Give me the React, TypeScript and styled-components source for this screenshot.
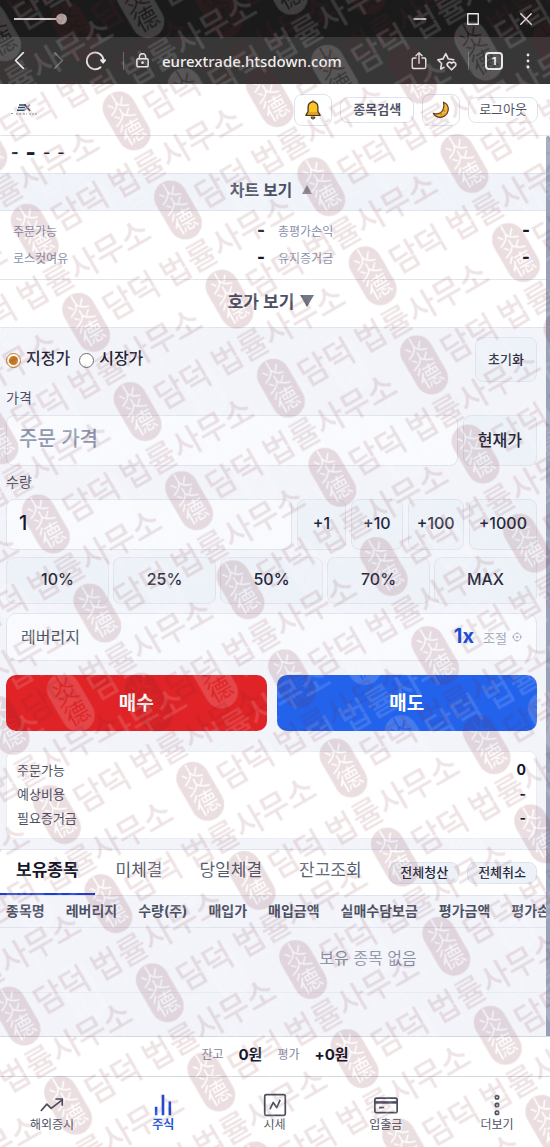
import React, { useState } from "react";
import styled, { createGlobalStyle } from "styled-components";

const GlobalStyle = createGlobalStyle`
  *, *::before, *::after { box-sizing: border-box; }
  body {
    margin: 0;
    background: #ffffff;
    color: #1c2033;
    font-family: "Inter", "Noto Sans CJK KR", sans-serif;
    font-size: 16px;
  }
  button, input { font-family: inherit; margin: 0; }
  button { cursor: pointer; }
`;

const line = "#dfe3ee";

const Page = styled.div`
  position: relative;
  display: flex;
  flex-direction: column;
  min-height: 100vh;
  overflow: hidden;
`;

/* Browser window */

const TitleBar = styled.div`
  display: flex;
  align-items: center;
  justify-content: space-between;
  height: 37px;
  padding: 0 17px 0 14px;
  background: #1a1a1a;
`;

const WindowButtons = styled.div`
  display: flex;
  gap: 39px;
`;

const IconButton = styled.button`
  display: flex;
  align-items: center;
  justify-content: center;
  padding: 0;
  border: 0;
  background: none;
  color: #e8e6e6;
  &:disabled { color: #777373; }
`;

const AddressBar = styled.div`
  display: flex;
  align-items: center;
  height: 47px;
  padding: 0 20px 0 12px;
  background: #373737;
  color: #e8e6e6;
`;

const History = styled.div`
  display: flex;
  align-items: center;
  gap: 20px;
`;

const Divider = styled.span<{ $before: number; $after: number }>`
  width: 1px;
  height: 18px;
  margin: 0 ${(p) => p.$after}px 0 ${(p) => p.$before}px;
  background: #6a6868;
`;

const Url = styled.span`
  flex: 1;
  margin-left: 12px;
  font-family: "Noto Sans", sans-serif;
  font-size: 15px;
  font-weight: 500;
  color: #f2f0f0;
`;

const BrowserTools = styled.div`
  display: flex;
  align-items: center;
`;

const ToolPair = styled.div`
  display: flex;
  gap: 9px;
`;

const TabCount = styled.button`
  width: 18px;
  height: 18px;
  margin-right: 23px;
  padding: 0;
  border: 2px solid #e8e6e6;
  border-radius: 4px;
  background: none;
  color: #f2f0f0;
  font-size: 11px;
  font-weight: 700;
  line-height: 14px;
`;

/* Site header */

const Header = styled.header`
  display: flex;
  align-items: center;
  justify-content: space-between;
  height: 52px;
  padding: 0 12px 0 11px;
  border-bottom: 1px solid ${line};
  background: #ffffff;
`;

const HeaderActions = styled.div`
  display: flex;
  align-items: center;
  gap: 8px;
`;

const SquareButton = styled.button`
  display: flex;
  align-items: center;
  justify-content: center;
  width: 38px;
  height: 32px;
  padding: 0;
  border: 1px solid #dde2f0;
  border-radius: 8px;
  background: #ffffff;
`;

const HeaderButton = styled.button<{ $bold?: boolean }>`
  height: 26px;
  padding: 0 ${(p) => (p.$bold ? 12 : 10)}px 2px;
  border: 1px solid #dde2f0;
  border-radius: 8px;
  background: #ffffff;
  color: #4a5064;
  font-size: 13px;
  font-weight: ${(p) => (p.$bold ? 700 : 400)};
  line-height: 20px;
`;

/* Scrolling body */

const Body = styled.div`
  display: flex;
  flex: 1;
`;

const Main = styled.main`
  flex: 1;
  min-width: 0;
  background: #f2f4fa;
`;

const ScrollTrack = styled.div`
  display: flex;
  width: 4px;
  background: #ffffff;
`;

const ScrollThumb = styled.div`
  flex: 1;
  border-radius: 4px 4px 0 0;
  background: #98a0b5;
`;

const Ticker = styled.div`
  display: flex;
  align-items: center;
  gap: 7px;
  height: 37px;
  padding: 0 11px 6px;
  background: #ffffff;
`;

const Quote = styled.span<{ $size: number; $bold?: boolean }>`
  font-size: ${(p) => p.$size}px;
  font-weight: ${(p) => (p.$bold ? 800 : 500)};
  line-height: 24px;
`;

const Toggle = styled.button<{ $tinted?: boolean }>`
  display: flex;
  align-items: center;
  justify-content: center;
  gap: ${(p) => (p.$tinted ? "10px" : "6px")};
  width: 100%;
  height: ${(p) => (p.$tinted ? "38px" : "49px")};
  padding: 0 4px 6px 0;
  border: 0;
  border-top: 1px solid ${line};
  border-bottom: 1px solid ${line};
  background: ${(p) => (p.$tinted ? "#f0f3f9" : "#ffffff")};
  color: #4a5064;
  font-size: ${(p) => (p.$tinted ? "16px" : "17px")};
  font-weight: 700;
`;

const AccountGrid = styled.dl`
  display: grid;
  grid-template-columns: 1fr 1fr;
  column-gap: 13px;
  margin: 0;
  padding: 6px 16px 8px 13px;
  background: #ffffff;
`;

const Pair = styled.div`
  display: flex;
  align-items: center;
  justify-content: space-between;
  height: 27px;
  padding-bottom: 1px;
`;

const PairLabel = styled.dt`
  color: #8a90aa;
  font-size: 12px;
`;

const PairValue = styled.dd`
  margin: 0;
  color: #12162a;
  font-size: 17px;
  font-weight: 800;
`;

/* Order form */

const OrderForm = styled.form`
  display: flex;
  flex-direction: column;
  padding: 9px 9px 10px 6px;
`;

const Row = styled.div`
  display: flex;
  align-items: center;
  justify-content: space-between;
`;

const RadioGroup = styled.div`
  display: flex;
  gap: 9px;
  padding-bottom: 3px;
`;

const RadioLabel = styled.label`
  display: flex;
  align-items: center;
  gap: 5px;
  font-size: 16px;
  font-weight: 500;
  line-height: 20px;
`;

const Radio = styled.input`
  appearance: none;
  width: 15px;
  height: 15px;
  margin: 4px 0 0;
  border: 1px solid #6d6d75;
  border-radius: 50%;
  background: #ffffff;
  &:checked {
    border: 1px solid #c77a1f;
    background: radial-gradient(circle, #c77a1f 0 4px, #ffffff 5px);
  }
`;

const FieldLabel = styled.label`
  display: flex;
  align-items: center;
  height: 33px;
  padding-bottom: 3px;
  color: #4a5064;
  font-size: 14px;
`;

const FieldRow = styled.div`
  display: flex;
  gap: 5px;
`;

const TextInput = styled.input`
  flex: 1;
  min-width: 0;
  height: 51px;
  padding: 0 12px 3px;
  border: 1px solid ${line};
  border-radius: 8px;
  background: #f8fafe;
  color: #12162a;
  font-size: 20px;
  font-weight: 500;
  &::placeholder { color: #8f98ae; opacity: 1; }
`;

const SoftButton = styled.button<{ $height: number; $pad?: number; $small?: boolean }>`
  height: ${(p) => p.$height}px;
  padding: 0 ${(p) => p.$pad ?? 0}px 3px;
  border: 1px solid ${line};
  border-radius: 8px;
  background: #edf1f8;
  color: #23273a;
  font-size: ${(p) => (p.$small ? 13 : 16)}px;
  font-weight: 500;
`;

const Percents = styled.div`
  display: grid;
  grid-template-columns: repeat(5, 1fr);
  gap: 4px;
  margin: 7px 0 9px;
`;

const Leverage = styled.button`
  display: flex;
  align-items: center;
  height: 48px;
  padding: 0 14px 3px;
  border: 1px solid ${line};
  border-radius: 10px;
  background: #f8fafe;
  color: #4a5064;
  font-size: 16px;
`;

const LeverageValue = styled.strong`
  margin-left: auto;
  margin-right: 9px;
  color: #1d4ed8;
  font-size: 20px;
`;

const LeverageHint = styled.span`
  display: flex;
  align-items: center;
  gap: 5px;
  padding-top: 3px;
  color: #98a1b5;
  font-size: 13px;
`;

const TradeRow = styled.div`
  display: grid;
  grid-template-columns: 1fr 1fr;
  gap: 10px;
  margin: 14px 0 20px;
`;

const TradeButton = styled.button<{ $color: string }>`
  height: 56px;
  padding: 0 0 4px;
  border: 0;
  border-radius: 10px;
  background: ${(p) => p.$color};
  color: #ffffff;
  font-size: 19px;
  font-weight: 700;
`;

const Summary = styled.dl`
  margin: 0;
  padding: 6px 10px 8px;
  border: 1px solid #e9ecf5;
  border-radius: 8px;
  background: #ffffff;
`;

const SummaryRow = styled.div`
  display: flex;
  align-items: center;
  justify-content: space-between;
  height: 24px;
  padding-bottom: 2px;
  font-size: 13px;
`;

const SummaryLabel = styled.dt`
  color: #4a5064;
`;

const SummaryValue = styled.dd`
  margin: 0;
  color: #12162a;
  font-size: 14px;
  font-weight: 700;
`;

/* Holdings */

const TabBar = styled.div`
  display: flex;
  gap: 5px;
  height: 46px;
  padding-right: 9px;
  border-top: 1px solid ${line};
  background: #ffffff;
`;

const Tab = styled.button<{ $active: boolean }>`
  flex: none;
  padding: 0 16px 6px;
  border: 0;
  border-bottom: 2px solid ${(p) => (p.$active ? "#1d3fd0" : "transparent")};
  background: none;
  color: ${(p) => (p.$active ? "#12162a" : "#555b6e")};
  font-size: 17px;
  font-weight: ${(p) => (p.$active ? 700 : 400)};
`;

const TabActions = styled.div`
  display: flex;
  align-items: center;
  gap: 8px;
  margin-left: auto;
`;

const PillButton = styled.button`
  height: 22px;
  padding: 0 10px 2px;
  border: 1px solid ${line};
  border-radius: 8px;
  background: #edf1f8;
  color: #23273a;
  font-size: 13px;
  font-weight: 500;
  line-height: 18px;
  white-space: nowrap;
`;

const TableClip = styled.div`
  overflow: hidden;
`;

const Table = styled.table`
  width: 736px;
  border-collapse: collapse;
`;

const Th = styled.th`
  height: 32px;
  padding: 0 15px 4px 6px;
  border-top: 1px solid ${line};
  border-bottom: 1px solid ${line};
  color: #4a5064;
  font-size: 14px;
  font-weight: 700;
  text-align: left;
  white-space: nowrap;
  &:last-child { width: 100%; }
`;

const EmptyCell = styled.td`
  height: 65px;
  padding: 0 0 6px;
  border-bottom: 1px solid #e6eaf3;
  color: #8a90a5;
  font-size: 16px;
  text-align: center;
`;

/* Footer */

const Balance = styled.div`
  display: flex;
  align-items: center;
  justify-content: center;
  gap: 15px;
  height: 40px;
  padding-bottom: 6px;
  border-top: 1px solid #d3d6e0;
  background: #ffffff;
`;

const BalanceLabel = styled.span`
  color: #7d839a;
  font-size: 12px;
`;

const BalanceValue = styled.strong`
  color: #12162a;
  font-size: 15px;
`;

const Nav = styled.nav`
  display: flex;
  justify-content: space-between;
  height: 71px;
  padding: 16px 25px 0 24px;
  border-top: 1px solid #d3d6e0;
  background: #ffffff;
`;

const NavLink = styled.a<{ $active?: boolean }>`
  display: flex;
  flex-direction: column;
  align-items: center;
  width: 56px;
  color: ${(p) => (p.$active ? "#1d4ed8" : "#4a4f60")};
  font-size: 12px;
  font-weight: ${(p) => (p.$active ? 700 : 400)};
  line-height: 16px;
  text-decoration: none;
`;

const Watermark = styled.svg`
  position: absolute;
  inset: 0;
  width: 100%;
  height: 100%;
  pointer-events: none;
`;

const Stroke = ({ size = 24, width = 2, children }: { size?: number; width?: number; children: React.ReactNode }) => (
  <svg width={size} height={size} viewBox="0 0 24 24" fill="none" stroke="currentColor" strokeWidth={width} strokeLinecap="round" strokeLinejoin="round" aria-hidden="true">
    {children}
  </svg>
);

const BellIcon = () => (
  <svg width="18" height="20" viewBox="0 0 18 20" aria-hidden="true">
    <path d="M7 17h4a2 2 0 0 1-4 0z" fill="#d98a1c" stroke="#4a3520" strokeWidth="1" />
    <path d="M9 2.2c3.3 0 4.900 2.300 4.900 5.200v4.200l2.300 3.700H1.800l2.300-3.700V7.400C4.100 4.500 5.700 2.200 9 2.200z" fill="#f9c623" stroke="#4a3520" strokeWidth="1.300" strokeLinejoin="round" />
    <path d="M7.600 2.200a1.400 1.300 0 0 1 2.800 0" fill="#f9c623" stroke="#4a3520" />
    <path d="M4 13h10" stroke="#d98a1c" strokeWidth="1.200" />
  </svg>
);

const MoonIcon = () => (
  <svg width="18" height="18" viewBox="0 0 18 18" aria-hidden="true">
    <path d="M11.500 1.200c3.300 1.300 5.300 4.600 4.600 8.400-.8 4.400-4.600 7.200-8.800 6.700C4.500 16 2.300 14.400 1.300 12.200c4 1.400 8 .2 9.700-3.400 1.200-2.600 1.200-5 .5-7.600z" fill="#f5b92b" stroke="#5a3d26" strokeWidth="1.200" strokeLinejoin="round" />
    <circle cx="12.500" cy="9.800" r="1" fill="#c98518" />
    <circle cx="9" cy="13" r="1" fill="#c98518" />
  </svg>
);

const Logo = () => (
  <svg width="28" height="14" viewBox="0 0 28 14" role="img" aria-label="EX">
    <g fill="none" strokeWidth="1.600">
      <path d="M8 2h7M7 4.500h7M6 7.200h8" stroke="#2f4a68" />
      <path d="M13.500 1.500l5.500 6.200" stroke="#2b2f3c" />
      <path d="M19 1.500l-6 6.200" stroke="#8c8aa0" />
    </g>
    <path d="M0 10.500h3M5 11h6M12 11h4M18 11h8" stroke="#8b8f99" strokeDasharray="2 1" />
  </svg>
);

const Mark = ({ id, color, x, y }: { id: string; color: string; x: number; y: number }) => {
  const spots: [number, number][] = [[20, 51.45], [155.7, 0], [155.7, 102.9], [-115.7, 0], [-115.7, 102.9]];
  return (
    <pattern id={id} width="271.4" height="102.9" patternUnits="userSpaceOnUse" patternTransform={`translate(${x} ${y}) rotate(-30) translate(-20 -51.45)`}>
      {spots.map(([sx, sy]) => (
        <g key={`${sx}-${sy}`} transform={`translate(${sx} ${sy})`} fill={color}>
          <rect x="-16.5" y="-31.5" width="33" height="63" rx="16.5" mask="url(#seal)" />
          <g opacity="0.85">
            <text x="23" y="11" fontSize="32" stroke={color} strokeWidth="0.6" fontFamily="Noto Sans CJK KR, sans-serif">담덕 법률사무소</text>
          </g>
        </g>
      ))}
    </pattern>
  );
};

const WatermarkLayer = () => (
  <Watermark aria-hidden="true">
    <defs>
      <mask id="seal" maskUnits="userSpaceOnUse" x="-17" y="-32" width="34" height="64">
        <rect x="-17" y="-32" width="34" height="64" fill="#ffffff" />
        <g fill="none" stroke="#000000" strokeWidth="1.500" strokeLinecap="round">
          <path d="M0-30v9q-1 6-10 9M0-21q2 6 10 8M-8-22l3 4M8-23l-4 5" />
          <path d="M0-14v6q-2 5-11 8M0-8q3 5 11 7M-8-9l3 3M8-10l-4 4" />
        </g>
        <text x="0" y="21" fontSize="24" textAnchor="middle" fill="#000000" fontFamily="Noto Sans CJK KR, sans-serif">德</text>
      </mask>
      <Mark id="light-mark" color="#ffffff" x={100} y={210} />
      <Mark id="red-mark" color="#781e28" x={178} y={210} />
    </defs>
    <rect width="100%" height="100%" fill="url(#light-mark)" opacity="0.16" />
    <rect width="100%" height="100%" fill="url(#red-mark)" opacity="0.145" />
  </Watermark>
);

const tabs = ["보유종목", "미체결", "당일체결", "잔고조회"];
const columns = ["종목명", "레버리지", "수량(주)", "매입가", "매입금액", "실매수담보금", "평가금액", "평가손익"];
const account = ["주문가능", "총평가손익", "로스컷여유", "유지증거금"];
const summary = [["주문가능", "0"], ["예상비용", "-"], ["필요증거금", "-"]];

const navItems = [
  { label: "해외증시", icon: <><path d="M-1 19l7-8 5 5L24 6" /><path d="M16 5h8v8" /></> },
  { label: "주식", icon: <><path d="M4 14v10M12 0v24M20 8v16" strokeWidth="3" /></> },
  { label: "시세", icon: <><rect x="0" y="0" width="24" height="24" rx="2" /><path d="M6 17l4-8 4 6 4-9" /></> },
  { label: "입출금", icon: <><rect x="-1" y="4" width="26" height="17" rx="2" /><path d="M-1 9h26" strokeWidth="3" /><path d="M4 15h6" /></> },
  { label: "더보기", icon: <><circle cx="12" cy="3" r="2" /><circle cx="12" cy="12" r="2" /><circle cx="12" cy="21" r="2" /></> },
];

export default function App() {
  const [kind, setKind] = useState("limit");
  const [tab, setTab] = useState(0);
  const [price, setPrice] = useState("");
  const [amount, setAmount] = useState("1");

  return (
    <Page>
      <GlobalStyle />
      <TitleBar>
        <svg width="54" height="12" viewBox="0 0 54 12" aria-hidden="true">
          <path d="M0 6h44" stroke="#cfc6c6" strokeWidth="2" />
          <circle cx="47.500" cy="6" r="5.500" fill="#b5a8a8" />
        </svg>
        <WindowButtons>
          <IconButton aria-label="최소화"><Stroke size={14} width={2.2}><path d="M2 12h20" /></Stroke></IconButton>
          <IconButton aria-label="최대화"><Stroke size={14} width={2.4}><rect x="3" y="3" width="18" height="18" /></Stroke></IconButton>
          <IconButton aria-label="닫기"><Stroke size={14} width={2.4}><path d="M3 3l18 18M21 3L3 21" /></Stroke></IconButton>
        </WindowButtons>
      </TitleBar>
      <AddressBar>
        <History>
          <IconButton aria-label="뒤로"><Stroke size={17} width={2.4}><path d="M16 1L5 12l11 11" /></Stroke></IconButton>
          <IconButton aria-label="앞으로" disabled><Stroke size={17} width={2}><path d="M8 1l11 11L8 23" /></Stroke></IconButton>
          <IconButton aria-label="새로고침"><Stroke size={20} width={2.2}><path d="M17.500 19.500A10 10 0 1 1 21 11" /><path d="M18 11h5l-2.500 3z" fill="currentColor" /></Stroke></IconButton>
        </History>
        <Divider $before={17} $after={11} />
        <Stroke size={15} width={2.4}><rect x="3" y="9" width="18" height="13" rx="2" /><path d="M7 9V6a5 5 0 0 1 10 0v3" /><circle cx="12" cy="15.500" r="1" /></Stroke>
        <Url>eurextrade.htsdown.com</Url>
        <BrowserTools>
          <ToolPair>
            <IconButton aria-label="공유"><Stroke size={18} width={2}><path d="M8 8H5a2 2 0 0 0-2 2v10a2 2 0 0 0 2 2h14a2 2 0 0 0 2-2V10a2 2 0 0 0-2-2h-3M12 15V1M8 5l4-4 4 4" /></Stroke></IconButton>
            <IconButton aria-label="즐겨찾기"><Stroke size={20} width={2}><path d="M8.500 19.500l-4 2 1-6.500-4.500-4.500 6.300-1L10.500 3l3 6.500 6.500 1" /><path d="M17.500 22.500l-4.700-4.700a2.800 2.800 0 0 1 4.700-3.100 2.800 2.800 0 0 1 4.700 3.100z" /></Stroke></IconButton>
          </ToolPair>
          <Divider $before={11} $after={16} />
          <TabCount aria-label="탭 1">1</TabCount>
          <IconButton aria-label="메뉴">
            <svg width="4" height="16" viewBox="0 0 4 16" fill="currentColor" aria-hidden="true"><circle cx="2" cy="2" r="1.400" /><circle cx="2" cy="8" r="1.400" /><circle cx="2" cy="14" r="1.400" /></svg>
          </IconButton>
        </BrowserTools>
      </AddressBar>

      <Header>
        <Logo />
        <HeaderActions>
          <SquareButton aria-label="알림"><BellIcon /></SquareButton>
          <HeaderButton $bold>종목검색</HeaderButton>
          <SquareButton aria-label="야간 모드"><MoonIcon /></SquareButton>
          <HeaderButton>로그아웃</HeaderButton>
        </HeaderActions>
      </Header>

      <Body>
        <Main>
          <Ticker>
            <Quote $size={16} $bold>-</Quote>
            <Quote $size={22} $bold>-</Quote>
            <Quote $size={16}>-</Quote>
            <Quote $size={16}>-</Quote>
          </Ticker>
          <Toggle $tinted>
            차트 보기
            <svg width="10" height="10" viewBox="0 0 10 10" aria-hidden="true"><path d="M5 1l5 9H0z" fill="#8b90a0" /></svg>
          </Toggle>
          <AccountGrid>
            {account.map((label) => (
              <Pair key={label}><PairLabel>{label}</PairLabel><PairValue>-</PairValue></Pair>
            ))}
          </AccountGrid>
          <Toggle>
            호가 보기
            <svg width="14" height="12" viewBox="0 0 14 12" aria-hidden="true"><path d="M0 0h14L7 12z" fill="#5a6072" /></svg>
          </Toggle>

          <OrderForm onSubmit={(e) => e.preventDefault()}>
            <Row>
              <RadioGroup>
                <RadioLabel><Radio type="radio" name="kind" checked={kind === "limit"} onChange={() => setKind("limit")} />지정가</RadioLabel>
                <RadioLabel><Radio type="radio" name="kind" checked={kind === "market"} onChange={() => setKind("market")} />시장가</RadioLabel>
              </RadioGroup>
              <SoftButton type="reset" $height={45} $pad={12} $small>초기화</SoftButton>
            </Row>
            <FieldLabel htmlFor="price">가격</FieldLabel>
            <FieldRow>
              <TextInput id="price" placeholder="주문 가격" value={price} onChange={(e) => setPrice(e.target.value)} />
              <SoftButton type="button" $height={51} $pad={14}>현재가</SoftButton>
            </FieldRow>
            <FieldLabel htmlFor="amount">수량</FieldLabel>
            <FieldRow>
              <TextInput id="amount" value={amount} onChange={(e) => setAmount(e.target.value)} />
              <SoftButton type="button" $height={51} $pad={15}>+1</SoftButton>
              <SoftButton type="button" $height={51} $pad={11}>+10</SoftButton>
              <SoftButton type="button" $height={51} $pad={8}>+100</SoftButton>
              <SoftButton type="button" $height={51} $pad={9}>+1000</SoftButton>
            </FieldRow>
            <Percents>
              {["10%", "25%", "50%", "70%", "MAX"].map((t) => (
                <SoftButton type="button" key={t} $height={47}>{t}</SoftButton>
              ))}
            </Percents>
            <Leverage type="button">
              레버리지
              <LeverageValue>1x</LeverageValue>
              <LeverageHint>
                조절
                <Stroke size={10} width={2}><circle cx="12" cy="12" r="9" /><circle cx="12" cy="12" r="2" /><path d="M12 1v3M12 20v3M1 12h3M20 12h3" /></Stroke>
              </LeverageHint>
            </Leverage>
            <TradeRow>
              <TradeButton type="submit" $color="#df2326">매수</TradeButton>
              <TradeButton type="submit" $color="#2362eb">매도</TradeButton>
            </TradeRow>
            <Summary>
              {summary.map(([label, value]) => (
                <SummaryRow key={label}><SummaryLabel>{label}</SummaryLabel><SummaryValue>{value}</SummaryValue></SummaryRow>
              ))}
            </Summary>
          </OrderForm>

          <TabBar>
            {tabs.map((label, i) => (
              <Tab key={label} $active={tab === i} onClick={() => setTab(i)}>{label}</Tab>
            ))}
            <TabActions>
              <PillButton>전체청산</PillButton>
              <PillButton>전체취소</PillButton>
            </TabActions>
          </TabBar>
          <TableClip>
            <Table>
              <thead>
                <tr>{columns.map((c) => <Th key={c} scope="col">{c}</Th>)}</tr>
              </thead>
              <tbody>
                <tr><EmptyCell colSpan={columns.length}>보유 종목 없음</EmptyCell></tr>
              </tbody>
            </Table>
          </TableClip>
        </Main>
        <ScrollTrack><ScrollThumb /></ScrollTrack>
      </Body>

      <Balance>
        <BalanceLabel>잔고</BalanceLabel>
        <BalanceValue>0원</BalanceValue>
        <BalanceLabel>평가</BalanceLabel>
        <BalanceValue>+0원</BalanceValue>
      </Balance>
      <Nav>
        {navItems.map(({ label, icon }) => (
          <NavLink key={label} href="#" $active={label === "주식"}>
            <svg width="24" height="24" viewBox="-2 -2 28 28" fill="none" stroke="currentColor" strokeWidth="2" strokeLinejoin="round" aria-hidden="true">{icon}</svg>
            {label}
          </NavLink>
        ))}
      </Nav>
      <WatermarkLayer />
    </Page>
  );
}
